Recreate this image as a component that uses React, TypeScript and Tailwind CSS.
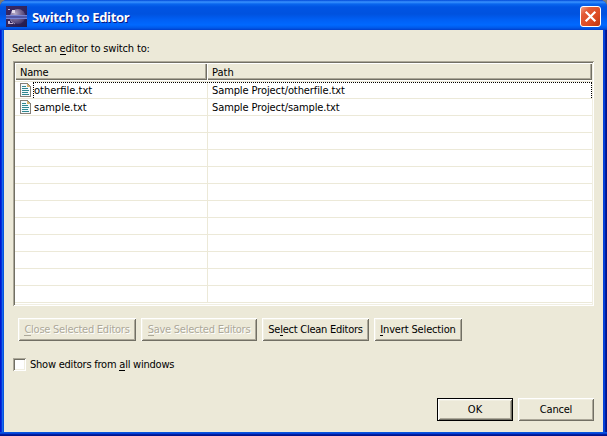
import type { ReactNode } from 'react';

const FONT = "font-['DejaVu_Sans_Condensed','DejaVu_Sans',sans-serif] [font-stretch:condensed]";

function Key({ children }: { children: ReactNode }) {
  return <span className="shadow-[0_1px_0_currentColor] inline-block h-[12px] leading-[13px]">{children}</span>;
}

function Button({ className, disabled, primary, children }: { className: string; disabled?: boolean; primary?: boolean; children: ReactNode }) {
  const frame = primary
    ? 'border border-black shadow-[inset_1px_1px_0_#fff,inset_-1px_-1px_0_#716f64,inset_2px_2px_0_#f1efe2,inset_-2px_-2px_0_#aca899]'
    : 'shadow-[inset_1px_1px_0_#fff,inset_-1px_-1px_0_#716f64,inset_2px_2px_0_#f1efe2,inset_-2px_-2px_0_#aca899]';
  return (
    <button
      disabled={disabled}
      className={`flex h-[23px] shrink-0 items-center justify-center bg-[#ece9d8] leading-[13px] whitespace-pre ${frame} ${
        disabled ? 'text-[#aca899] [text-shadow:1px_1px_0_#fff]' : 'text-black'
      } ${className}`}
    >
      <span>{children}</span>
    </button>
  );
}

function FileIcon() {
  return (
    <svg width="12" height="14" viewBox="0 0 12 14" shapeRendering="crispEdges" className="shrink-0">
      <path d="M.5 .5H7.5L10.5 3.5V13.5H.5Z" fill="#f4fafc" stroke="#848078" />
      <path d="M7 1h1v1h1v1h1v1H7Z" fill="#d9b36c" />
      <path d="M2 3h4v1H2zM2 5h6v1H2zM2 7h7v1H2zM2 9h6v1H2zM2 11h7v1H2z" fill="#2f8790" />
    </svg>
  );
}

function EclipseLogo() {
  return (
    <svg width="21" height="21" viewBox="0 0 21 21" className="shrink-0">
      <defs>
        <linearGradient id="sky" x2="1" y2="1">
          <stop stopColor="#3a2864" />
          <stop offset=".6" stopColor="#30245c" />
          <stop offset="1" stopColor="#21194a" />
        </linearGradient>
        <radialGradient id="moon" cx=".3" cy=".3" r=".8">
          <stop stopColor="#b8aec8" />
          <stop offset=".45" stopColor="#7a6c98" />
          <stop offset="1" stopColor="#3a2e66" />
        </radialGradient>
      </defs>
      <path d="M0 0h21v21H0z" fill="url(#sky)" />
      <circle cx="12" cy="10.5" r="7.5" fill="url(#moon)" />
      <path d="M6 5Q4 9 5 15L9 18" fill="none" stroke="#a094ba" strokeWidth="1" />
      <path d="M2 3h2v1H2zM2 15h2v3H2zM4 17h3v1H4z" fill="#c4b4d4" />
      <path d="M6 4h3v3H6z" fill="#e4dcec" />
      <path d="M0 9h21v1H0zM0 12h21v1H0z" fill="#7683d2" />
      <path d="M0 10h21v2H0z" fill="#5156a4" />
    </svg>
  );
}

const files = [
  { name: 'otherfile.txt', path: 'Sample Project/otherfile.txt' },
  { name: 'sample.txt', path: 'Sample Project/sample.txt' },
];

function Row({ index }: { index: number }) {
  const file = files[index];
  return (
    <div className="relative flex h-[17px] shrink-0 border-b border-[#ece9d8]">
      <div className="flex w-[193px] shrink-0 items-center border-r border-[#ece9d8] pl-[5px]">
        {file && <FileIcon />}
        {file && <span className="ml-[2px] leading-[16px] pt-[2px]">{file.name}</span>}
      </div>
      <div className="pl-1 leading-[18px] tracking-[-0.1px]">{file?.path}</div>
      {index === 0 && <div className="absolute top-0 right-0 bottom-0 left-[18px] border border-b-0 border-dotted border-black" />}
    </div>
  );
}

export default function App() {
  return (
    <div className="h-[436px] w-[607px] bg-[#7b7b74]">
      <div className={`flex h-full flex-col overflow-hidden rounded-t-[7px] bg-[#0831d9] text-[11px] text-black ${FONT}`}>
        <header className="flex h-[30px] shrink-0 items-center bg-[linear-gradient(180deg,#0048d8_0px,#3a93ff_2px,#0966ee_4px,#0054e3_7px,#0052df_14px,#0060f5_20px,#0069ff_25px,#0058e8_28px,#003dcb_30px)] pt-[2px] pl-[6px] pr-[6px]">
          <EclipseLogo />
          <h1 className="ml-[5px] pt-[1px] font-['Open_Sans','Noto_Sans',sans-serif] text-[13px] leading-[18px] font-bold tracking-[-0.33px] [font-stretch:normal] whitespace-pre text-white [text-shadow:1px_1px_0_#0a1883]">Switch to Editor</h1>
          <button className="ml-auto flex size-[21px] items-center justify-center rounded-[3px] border border-white bg-[linear-gradient(135deg,#f0a088_0%,#e35b37_25%,#dc4a22_65%,#b93510_100%)]">
            <svg width="13" height="13" viewBox="0 0 13 13">
              <path d="M1.7 1.7 11.3 11.3M11.3 1.7 1.7 11.3" stroke="#fff" strokeWidth="2.2" />
            </svg>
          </button>
        </header>

        <div className="flex flex-1 bg-[linear-gradient(90deg,#0019cf_0_1px,#0831d9_1px_2px,#166aee_2px_3px,#0855dd_3px_4px,#0855dd_4px_603px,#0441d8_603px_605px,#001ea0_605px_606px,#00138c_606px)] px-1">
          <main className="flex h-[402px] flex-1 flex-col bg-[#ece9d8] pl-[9px]">
            <p className="mt-[11px] -ml-px h-[20px] leading-[15px] tracking-[-0.16px] whitespace-pre">
              Select an <Key>e</Key>ditor to switch to:
            </p>
            <div className="h-[245px] w-[581px] bg-white shadow-[inset_1px_1px_0_#aca899,inset_-1px_-1px_0_#fff,inset_2px_2px_0_#716f64,inset_-2px_-2px_0_#f1efe2] p-[2px]">
              <div className="flex h-[240px] w-[577px] flex-col overflow-hidden">
                <div className="flex h-[17px] shrink-0">
                  <div className="w-[192px] bg-[#ece9d8] pl-[5px] leading-[19px] tracking-[-0.2px] shadow-[inset_1px_1px_0_#fff,inset_-1px_-1px_0_#716f64,inset_-2px_-2px_0_#aca899]">Name</div>
                  <div className="flex-1 bg-[#ece9d8] pl-[5px] leading-[19px] shadow-[inset_1px_1px_0_#fff,inset_-1px_-1px_0_#716f64,inset_-2px_-2px_0_#aca899]">Path</div>
                </div>
                <div className="mt-px h-px shrink-0 bg-[#ece9d8]" />
                {Array.from({ length: 13 }, (_, i) => (
                  <Row key={i} index={i} />
                ))}
              </div>
            </div>
            <div className="mt-[12px] flex gap-[5px] pl-[5px]">
              <Button disabled className="w-[118px] tracking-[-0.25px]"><Key>C</Key>lose Selected Editors</Button>
              <Button disabled className="w-[116px] tracking-[-0.25px]"><Key>S</Key>ave Selected Editors</Button>
              <Button className="w-[107px] tracking-[-0.25px]">Se<Key>l</Key>ect Clean Editors</Button>
              <Button className="w-[88px] tracking-[-0.15px]"><Key>I</Key>nvert Selection</Button>
            </div>
            <label className="mt-[17px] flex h-[13px] items-center">
              <span className="size-[13px] bg-white shadow-[inset_1px_1px_0_#aca899,inset_-1px_-1px_0_#fff,inset_2px_2px_0_#716f64,inset_-2px_-2px_0_#f1efe2]" />
              <span className="ml-1 leading-[13px] tracking-[-0.23px] whitespace-pre">Show editors from <Key>a</Key>ll windows</span>
            </label>
            <div className="mt-[27px] flex justify-end gap-[5px] pr-[9px]">
              <Button primary className="w-[76px]">OK</Button>
              <Button className="w-[76px] tracking-[-0.2px]">Cancel</Button>
            </div>
          </main>
        </div>
        <div className="h-[4px] shrink-0 bg-[linear-gradient(180deg,#0855dd_0_1px,#0441d8_1px_2px,#001ea0_2px_3px,#00138c_3px)]" />
      </div>
    </div>
  );
}
